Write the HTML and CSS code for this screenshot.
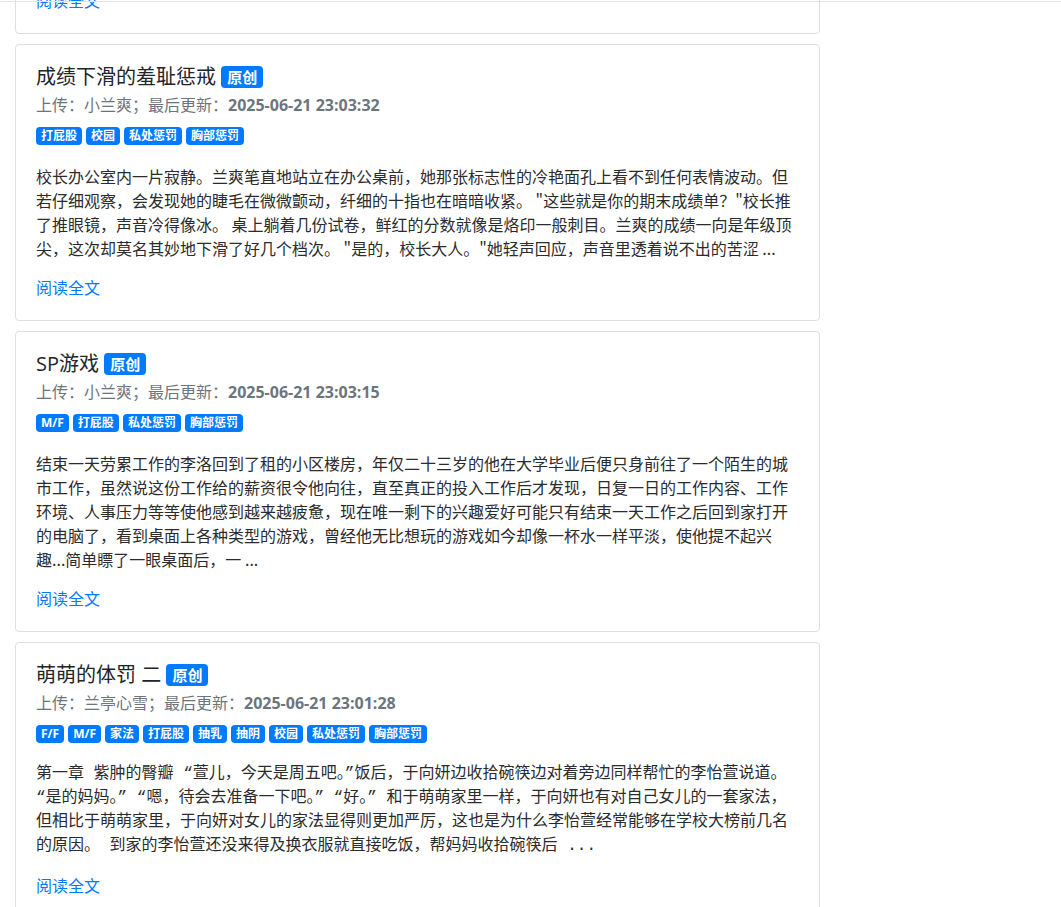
FILE: index.html
```html
<!DOCTYPE html>
<html lang="zh-CN">
<head>
    <meta charset="UTF-8">
    <meta name="viewport" content="width=device-width, initial-scale=1.0">
    <title>最新文章</title>
    <link rel="stylesheet" href="styles.css">
</head>
<body>
    <div class="top-line"></div>

    <div class="feed">
        <div class="card card-cut">
            <div class="card-body">
                <a class="read-more" href="#">阅读全文</a>
            </div>
        </div>

        <div class="card">
            <div class="card-body">
                <h5 class="card-title">成绩下滑的羞耻惩戒 <span class="badge">原创</span></h5>
                <div class="meta">上传：小兰爽；最后更新：<strong>2025-06-21 23:03:32</strong></div>
                <div class="tags">
                    <span class="badge">打屁股</span>
                    <span class="badge">校园</span>
                    <span class="badge">私处惩罚</span>
                    <span class="badge">胸部惩罚</span>
                </div>
                <p class="excerpt">校长办公室内一片寂静。兰爽笔直地站立在办公桌前，她那张标志性的冷艳面孔上看不到任何表情波动。但若仔细观察，会发现她的睫毛在微微颤动，纤细的十指也在暗暗收紧。 "这些就是你的期末成绩单？"校长推了推眼镜，声音冷得像冰。 桌上躺着几份试卷，鲜红的分数就像是烙印一般刺目。兰爽的成绩一向是年级顶尖，这次却莫名其妙地下滑了好几个档次。 "是的，校长大人。"她轻声回应，声音里透着说不出的苦涩 ...</p>
                <a class="read-more" href="#">阅读全文</a>
            </div>
        </div>

        <div class="card">
            <div class="card-body">
                <h5 class="card-title">SP游戏 <span class="badge">原创</span></h5>
                <div class="meta">上传：小兰爽；最后更新：<strong>2025-06-21 23:03:15</strong></div>
                <div class="tags">
                    <span class="badge">M/F</span>
                    <span class="badge">打屁股</span>
                    <span class="badge">私处惩罚</span>
                    <span class="badge">胸部惩罚</span>
                </div>
                <p class="excerpt">结束一天劳累工作的李洛回到了租的小区楼房，年仅二十三岁的他在大学毕业后便只身前往了一个陌生的城市工作，虽然说这份工作给的薪资很令他向往，直至真正的投入工作后才发现，日复一日的工作内容、工作环境、人事压力等等使他感到越来越疲惫，现在唯一剩下的兴趣爱好可能只有结束一天工作之后回到家打开的电脑了，看到桌面上各种类型的游戏，曾经他无比想玩的游戏如今却像一杯水一样平淡，使他提不起兴趣...简单瞟了一眼桌面后，一 ...</p>
                <a class="read-more" href="#">阅读全文</a>
            </div>
        </div>

        <div class="card">
            <div class="card-body">
                <h5 class="card-title">萌萌的体罚 二 <span class="badge">原创</span></h5>
                <div class="meta">上传：兰亭心雪；最后更新：<strong>2025-06-21 23:01:28</strong></div>
                <div class="tags">
                    <span class="badge">F/F</span>
                    <span class="badge">M/F</span>
                    <span class="badge">家法</span>
                    <span class="badge">打屁股</span>
                    <span class="badge">抽乳</span>
                    <span class="badge">抽阴</span>
                    <span class="badge">校园</span>
                    <span class="badge">私处惩罚</span>
                    <span class="badge">胸部惩罚</span>
                </div>
                <p class="excerpt excerpt-dialogue">第一章 紫肿的臀瓣 “萱儿，今天是周五吧。”饭后，于向妍边收拾碗筷边对着旁边同样帮忙的李怡萱说道。 “是的妈妈。” “嗯，待会去准备一下吧。” “好。” 和于萌萌家里一样，于向妍也有对自己女儿的一套家法，但相比于萌萌家里，于向妍对女儿的家法显得则更加严厉，这也是为什么李怡萱经常能够在学校大榜前几名的原因。 到家的李怡萱还没来得及换衣服就直接吃饭，帮妈妈收拾碗筷后 ...</p>
                <a class="read-more" href="#">阅读全文</a>
            </div>
        </div>
    </div>
</body>
</html>
```

FILE: styles.css
```css
:root {
    --primary-color: #007bff;
    --text-color: #212529;
    --muted: #6c757d;
    --border: #dfdfdf;
}

* {
    margin: 0;
    padding: 0;
    box-sizing: border-box;
}

body {
    font-family: 'Open Sans', 'Noto Sans CJK SC', sans-serif;
    font-size: 16px;
    line-height: 1.5;
    color: var(--text-color);
    background: #fff;
}

.top-line {
    position: fixed;
    top: 1px;
    left: 0;
    right: 0;
    height: 1px;
    background: #e4e4e4;
    z-index: 10;
}

.feed {
    width: 835px;
    padding: 0 15px;
}

.card {
    border: 1px solid var(--border);
    border-radius: 4px;
    margin-bottom: 10px;
    background: #fff;
}

.card-cut {
    margin-top: -32px;
}

.card-body {
    padding: 20px;
}

.card-title {
    font-size: 20px;
    font-weight: 400;
    line-height: 24px;
    margin-bottom: 4px;
}

.card-title .badge {
    font-size: 15px;
    padding: 4px 6px 3px;
    vertical-align: 1px;
}

.meta {
    color: var(--muted);
    line-height: 24px;
    margin-bottom: 10px;
}

.meta strong {
    font-weight: 700;
}

.tags {
    display: flex;
    flex-wrap: wrap;
    gap: 4px;
    margin-bottom: 19px;
}

.badge {
    display: inline-block;
    background: var(--primary-color);
    color: #fff;
    font-size: 12px;
    font-weight: 700;
    line-height: 1;
    padding: 3px 5px;
    border-radius: 4px;
    white-space: nowrap;
}

.excerpt {
    font-family: 'Noto Sans CJK SC', 'Open Sans', sans-serif;
    line-height: 24px;
    margin-bottom: 16px;
    color: #2b2b2b;
}

/* dialogue quotes and gaps get a wider cell, so lines break where the original does */
.excerpt-dialogue {
    font-family: 'Liberation Mono', 'Noto Sans CJK SC', sans-serif;
}

.read-more {
    display: block;
    line-height: 24px;
    color: var(--primary-color);
    text-decoration: none;
}

.read-more:hover {
    text-decoration: underline;
}
```
